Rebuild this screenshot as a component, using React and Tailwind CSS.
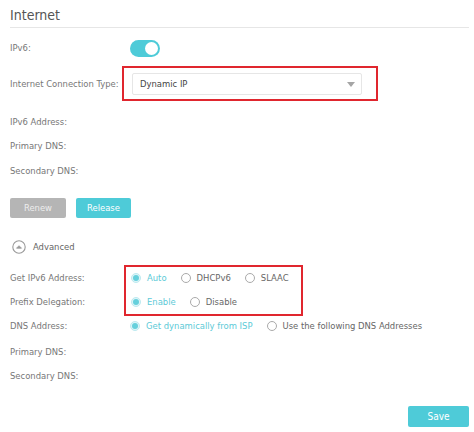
import React, { useState } from 'react';

const font = { fontFamily: '"DejaVu Sans Condensed", "DejaVu Sans", sans-serif' };

function Radio({ label, checked }) {
    return (
        <div className="flex items-center">
            <span className={`w-[10px] h-[10px] rounded-full border flex items-center justify-center ${checked ? 'border-[#bdeaf0] bg-[#dff5f8]' : 'border-[#aaa] bg-white'}`}>
                {checked && <span className="w-[6px] h-[6px] rounded-full bg-[#66d0dc]"></span>}
            </span>
            <span className={`ml-[6px] ${checked ? 'text-[#5ccad7]' : 'text-[#666]'}`}>{label}</span>
        </div>
    );
}

function Row({ label, children, labelW = 'w-[120px]', className = '' }) {
    return (
        <div className={`flex items-center h-[20px] ${className}`}>
            <div className={`${labelW} shrink-0 text-[#777]`}>{label}</div>
            {children}
        </div>
    );
}

export default function App() {
    const [ipv6, setIpv6] = useState(true);

    return (
        <div className="w-[474px] h-[432px] bg-white text-[9.4px] leading-none overflow-hidden" style={font}>
            <div className="pl-[10px] pr-[5px]">
                <div className="h-[28px] border-b border-[#e6e6e6] pt-[8px]">
                    <h1 className="text-[14px] leading-[14px] text-[#555]">Internet</h1>
                </div>

                <Row label="IPv6:" className="mt-[10px]">
                    <button
                        onClick={() => setIpv6(!ipv6)}
                        className={`relative w-[30px] h-[17px] rounded-full ${ipv6 ? 'bg-[#4ecbd8]' : 'bg-[#ccc]'}`}
                    >
                        <span className={`absolute top-[2px] w-[13px] h-[13px] rounded-full bg-white ${ipv6 ? 'left-[15px]' : 'left-[2px]'}`}></span>
                    </button>
                </Row>

                <div className="flex items-center mt-[8px]">
                    <div className="w-[112px] shrink-0 text-[#777]">Internet Connection Type:</div>
                    <div className="w-[256px] h-[35px] border-2 border-[#e0262e] pl-[8px] pr-[14px] pt-[5px]">
                        <div className="h-[22px] border border-[#e6e6e6] rounded-[2px] flex items-center justify-between pl-[7px] pr-[6px] text-[#444]">
                            <span>Dynamic IP</span>
                            <svg width="8" height="5" viewBox="0 0 8 5"><path d="M0 0 L8 0 L4 5 Z" fill="#a5a5a5" /></svg>
                        </div>
                    </div>
                </div>

                <Row label="IPv6 Address:" className="mt-[11px]" />
                <Row label="Primary DNS:" className="mt-[4px]" />
                <Row label="Secondary DNS:" className="mt-[5px]" />

                <div className="flex gap-[10px] mt-[17px]">
                    <button className="w-[56px] h-[20px] rounded-[2px] bg-[#b5b5b5] text-[#ededed]">Renew</button>
                    <button className="w-[55px] h-[20px] rounded-[2px] bg-[#4ecbd8] text-white">Release</button>
                </div>

                <div className="flex items-center h-[20px] mt-[19px]">
                    <svg width="14" height="14" viewBox="0 0 14 14" className="ml-[2px]">
                        <circle cx="7" cy="7" r="6.2" fill="none" stroke="#999" strokeWidth="1.1" />
                        <path d="M4.5 8.2 L7 5.7 L9.5 8.2 Z" fill="#999" stroke="#999" strokeWidth="0.8" strokeLinejoin="round" />
                    </svg>
                    <span className="ml-[7px] text-[#666]">Advanced</span>
                </div>

                <div className="flex mt-[8px]">
                    <div className="w-[114px] shrink-0 pt-[3px] flex flex-col gap-[4px] text-[#777]">
                        <div className="h-[20px] flex items-center">Get IPv6 Address:</div>
                        <div className="h-[20px] flex items-center">Prefix Delegation:</div>
                    </div>
                    <div className="w-[179px] h-[51px] border-2 border-[#e0262e] py-[1px] pl-[5px] flex flex-col gap-[4px]">
                        <div className="h-[20px] flex items-center gap-[14px]">
                            <Radio label="Auto" checked />
                            <Radio label="DHCPv6" />
                            <Radio label="SLAAC" />
                        </div>
                        <div className="h-[20px] flex items-center gap-[14px]">
                            <Radio label="Enable" checked />
                            <Radio label="Disable" />
                        </div>
                    </div>
                </div>

                <Row label="DNS Address:">
                    <div className="flex items-center gap-[14px]">
                        <Radio label="Get dynamically from ISP" checked />
                        <Radio label="Use the following DNS Addresses" />
                    </div>
                </Row>
                <Row label="Primary DNS:" className="mt-[6px]" />
                <Row label="Secondary DNS:" className="mt-[4px]" />

                <div className="flex justify-end mt-[20px]">
                    <button className="w-[61px] h-[21px] rounded-[2px] bg-[#4ecbd8] text-white text-[10px]">Save</button>
                </div>
            </div>
        </div>
    );
}
